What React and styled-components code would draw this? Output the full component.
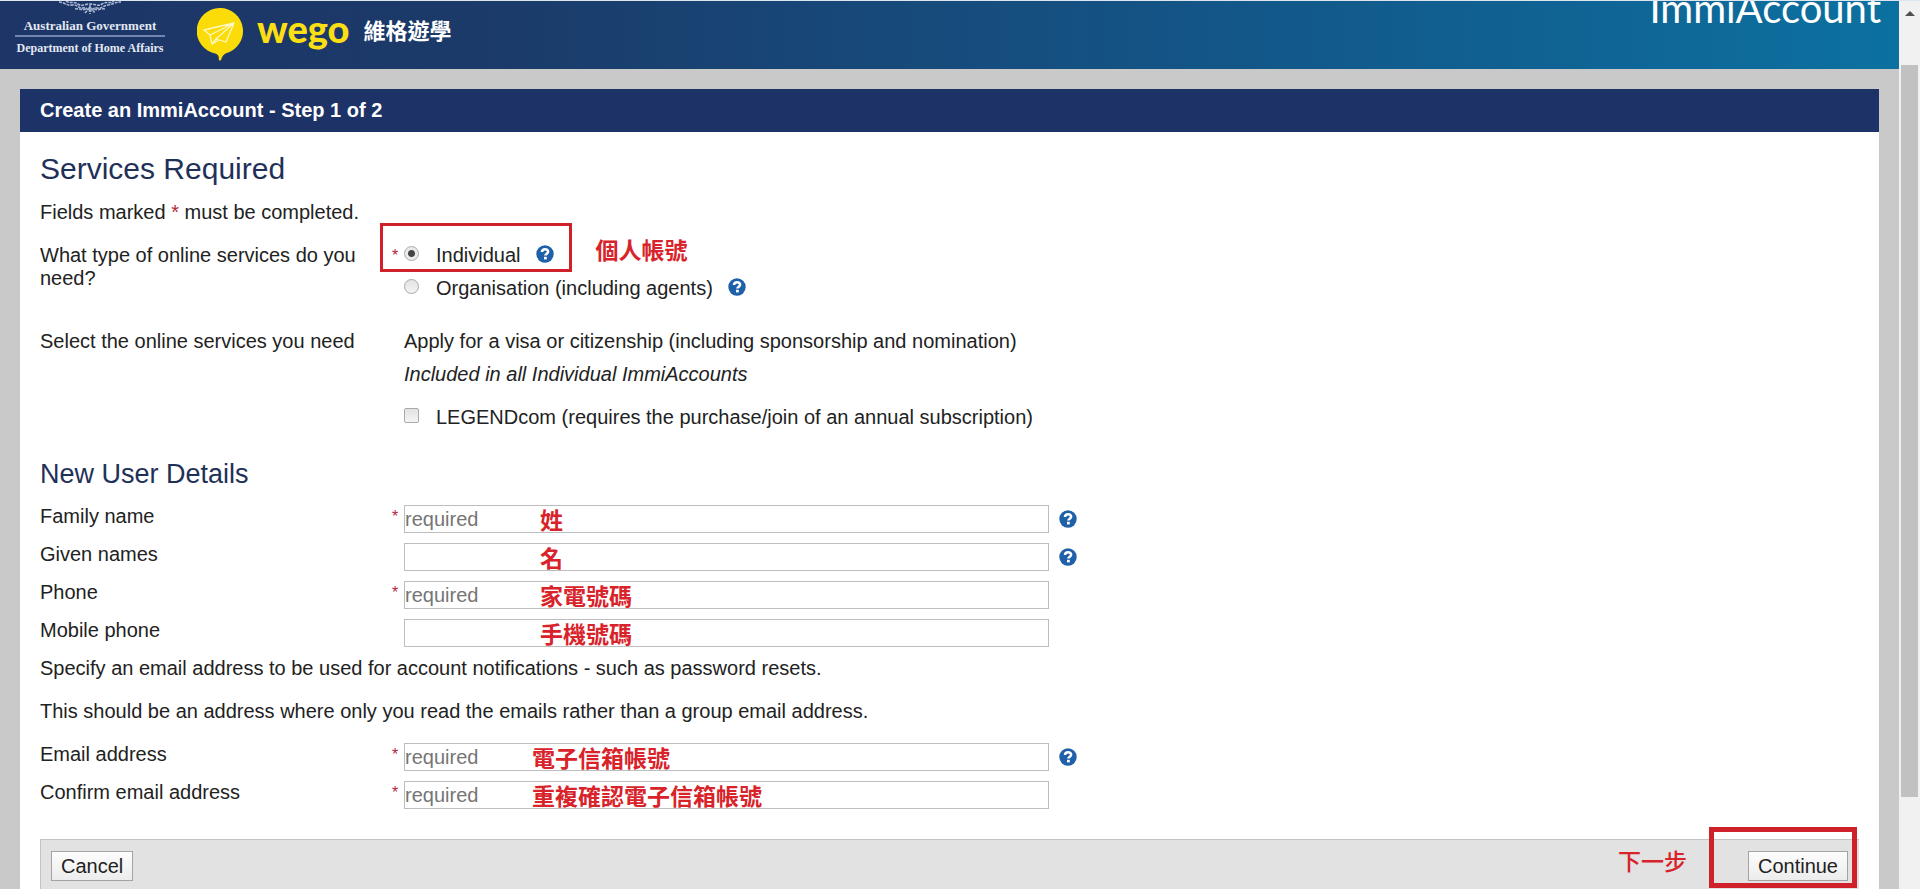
import { useState } from 'react';
import styled, { createGlobalStyle, css } from 'styled-components';

const GlobalStyle = createGlobalStyle`
    * {
        box-sizing: border-box;
    }

    body {
        margin: 0;
        background: #c9c9c9;
        color: #222;
        font-family: "Liberation Sans", Arial, "Noto Sans CJK TC", sans-serif;
        font-size: 20px;
        line-height: 23px;
    }

    h1, h2, p {
        margin: 0;
    }
`;

const Window = styled.div`
    display: flex;
    height: 100vh;
    overflow: hidden;
    border-top: 1px solid #dde6ee;
`;

const Page = styled.div`
    flex: 1;
    min-width: 0;
`;

const Header = styled.header`
    display: flex;
    align-items: flex-start;
    height: 68px;
    padding: 0 18px 0 15px;
    overflow: hidden;
    color: #fff;
    background: linear-gradient(90deg, #1d3567 0%, #1b3a69 25%, #125a8c 70%, #0c71a0 100%);
`;

const Crest = styled.div`
    display: flex;
    flex-direction: column;
    align-items: center;
    width: 150px;
    color: #e3e8f2;
    font-family: "Liberation Serif", "Times New Roman", serif;
    font-weight: bold;
    font-size: 12px;
    line-height: 16px;
    white-space: nowrap;

    svg {
        display: block;
    }
`;

const Government = styled.div`
    width: 100%;
    padding: 4px 0 1px;
    margin-bottom: 3px;
    border-bottom: 2px solid #7284b0;
    font-size: 13px;
    text-align: center;
`;

const Partner = styled.div`
    display: flex;
    align-items: flex-start;
    padding-top: 7px;
    margin-left: 32px;
`;

const Wordmark = styled.span`
    margin-left: 14px;
    color: #fbdf14;
    font-family: Lato, sans-serif;
    font-weight: 900;
    font-size: 38px;
    line-height: 40px;
`;

const PartnerName = styled.span`
    margin-left: 14px;
    font-family: "Noto Sans CJK TC", sans-serif;
    font-weight: 700;
    font-size: 22px;
    line-height: 42px;
`;

const Product = styled.span`
    margin-left: auto;
    font-family: Lato, sans-serif;
    font-size: 40px;
    line-height: 14px;
`;

const Panel = styled.main`
    margin: 20px 20px 0;
    background: #fff;
`;

const PanelTitle = styled.h1`
    padding: 10px 20px;
    background: #1d3266;
    color: #fff;
    font-size: 20px;
    line-height: 23px;
`;

const Form = styled.form`
    padding: 20px 20px 0;
`;

const Heading = styled.h2`
    margin-bottom: 15px;
    color: #1f3158;
    font-weight: normal;
    font-size: ${props => props.$small ? '27px' : '30px'};
    line-height: ${props => props.$small ? '31px' : '34px'};
`;

const Text = styled.p`
    margin-bottom: 20px;
`;

const Star = styled.span`
    color: #b5283c;
`;

const Row = styled.div`
    display: grid;
    grid-template-columns: 352px 1fr;
    align-items: start;
    min-height: ${props => props.$field ? '38px' : '0'};
    margin-bottom: ${props => props.$gap || '0'};
`;

const Question = styled.div`
    max-width: 330px;
`;

const Answer = styled.div`
    display: grid;
    grid-template-columns: 12px 1fr;

    > ${Star} {
        font-size: 16px;
    }
`;

const Options = styled.div`
    display: flex;
    flex-direction: column;
    align-items: flex-start;
    gap: 10px;
`;

const Included = styled.em`
    margin-bottom: 10px;
`;

const Option = styled.div`
    position: relative;
    display: flex;
    align-items: center;
`;

const tick = css`
    appearance: none;
    width: 15px;
    height: 15px;
    margin: 0 17px 4px 0;
    border: 1px solid #a9a9a9;
    background: linear-gradient(#e2e2e2, #f4f4f4);
`;

const Radio = styled.input.attrs({ type: 'radio' })`
    ${tick}
    border-radius: 50%;

    &:checked {
        background: radial-gradient(circle, #444 0 3px, #ebebeb 4px);
    }
`;

const Checkbox = styled.input.attrs({ type: 'checkbox' })`
    ${tick}
    border-radius: 2px;
`;

const HelpButton = styled.button`
    display: flex;
    margin-left: ${props => props.$far ? '15px' : '10px'};
    margin-bottom: ${props => props.$far ? '3px' : '0'};
    padding: 0;
    border: 0;
    background: none;
`;

const InputLine = styled.div`
    position: relative;
    display: flex;
    align-items: center;
`;

const TextInput = styled.input`
    width: 645px;
    max-width: 100%;
    height: 28px;
    padding: 0;
    border: 1px solid #bdbdbd;
    background: #fff;
    font: inherit;

    &::placeholder {
        color: #757575;
    }
`;

/* red notes laid over the form */
const Note = styled.span`
    color: #d8232a;
    font-family: "Noto Sans CJK TC", sans-serif;
    font-weight: 700;
    font-size: 23px;
    line-height: 28px;
    white-space: nowrap;
    pointer-events: none;
`;

const FieldNote = styled(Note)`
    position: absolute;
    top: 0;
    left: ${props => props.$left}px;
`;

const OptionNote = styled(Note)`
    position: absolute;
    bottom: 4px;
    left: 100%;
    margin-left: 42px;
`;

const StepNote = styled(Note)`
    font-weight: 500;
    line-height: 18px;
`;

const Frame = styled.span`
    position: absolute;
    inset: ${props => props.$inset};
    border: ${props => props.$thick ? '5px' : '3px'} solid #d0202a;
    pointer-events: none;
`;

const Footer = styled.footer`
    display: flex;
    align-items: flex-start;
    height: 70px;
    margin-top: 20px;
    padding: 11px 11px 11px 10px;
    border-top: 1px solid #c4c4c4;
    border-left: 1px solid #c4c4c4;
    background: #e2e2e2;
`;

const Button = styled.button`
    display: block;
    height: 30px;
    padding: 0 9px;
    border: 1px solid #a3a3a3;
    background: linear-gradient(#fdfdfd, #ececec);
    color: #222;
    font: inherit;
`;

const Next = styled.div`
    display: flex;
    align-items: flex-start;
    gap: 61px;
    margin-left: auto;
`;

const Target = styled.div`
    position: relative;
`;

const Scrollbar = styled.div`
    display: flex;
    flex-direction: column;
    align-items: center;
    width: 21px;
    background: #f1f1f1;
`;

const ArrowBox = styled.div`
    height: 64px;
    padding-top: 8px;
    line-height: 0;
`;

const Thumb = styled.div`
    width: 17px;
    height: calc(100% - 156px);
    background: #c1c1c1;
`;

const names = [
    { id: 'family', label: 'Family name', required: true, note: '姓', help: true },
    { id: 'given', label: 'Given names', note: '名', help: true },
    { id: 'phone', label: 'Phone', required: true, note: '家電號碼' },
    { id: 'mobile', label: 'Mobile phone', note: '手機號碼' },
];

const emails = [
    { id: 'email', label: 'Email address', required: true, note: '電子信箱帳號', help: true },
    { id: 'confirm', label: 'Confirm email address', required: true, note: '重複確認電子信箱帳號' },
];

const Help = ({ far }) => (
    <HelpButton type='button' aria-label='Help' $far={far}>
        <svg width='18' height='18' viewBox='0 0 18 18'>
            <circle cx='9' cy='9' r='8.7' fill='#1f61a8' />
            <path d='M6 7.100c0-1.900 1.200-2.900 3.100-2.900s3 1 3 2.500c0 2-2.700 2-2.700 3.900' fill='none' stroke='#fff' strokeWidth='2.600' />
            <rect x='8' y='11.800' width='2.800' height='2.600' fill='#fff' />
        </svg>
    </HelpButton>
);

const CrestArt = () => (
    <svg width='70' height='13' viewBox='0 0 70 13' fill='none' stroke='#a9b7d2' strokeWidth='1.600' strokeDasharray='3 1'>
        <path d='M4 1c6 0 7 4 13 3s6 4 11 3 4 3 7 3 2-4 7-3 5-2 11-3 7-3 13-3' />
        <path d='M11 0c4 3 8 0 12 3s6 0 12 0 8 3 12 0 8 0 12-3' />
        <path d='M20 8c5-1 6 2 11 0M50 8c-5-1-6 2-11 0M30 12l5-6 5 6M35 4v9' />
    </svg>
);

const Bubble = () => (
    <svg width='46' height='53' viewBox='0 0 46 53'>
        <path d='M23 0a23 23 0 0 1 6 45.200c-2 1-4 3-5 6.800q-1 1-2 0c-.5-3 .5-4-3-6.300A23 23 0 0 1 23 0z' fill='#fbdc08' />
        <g fill='none' stroke='#fff8c4' strokeWidth='1.300' strokeLinejoin='round'>
            <path d='M37 15L7 22l6 5zM37 15L13 27l2 9 4-5zM37 15L19 31l10 3z' />
            <path d='M15 36l7-4' />
        </g>
    </svg>
);

const Field = ({ field, left }) => {
    const [value, setValue] = useState('');

    return (
        <Row $field>
            <label htmlFor={field.id}>{field.label}</label>
            <Answer>
                <Star>{field.required && '*'}</Star>
                <InputLine>
                    <TextInput id={field.id} name={field.id} type='text' value={value}
                        placeholder={field.required ? 'required' : ''}
                        onChange={(e) => setValue(e.target.value)} />
                    <FieldNote $left={left}>{field.note}</FieldNote>
                    {field.help && <Help />}
                </InputLine>
            </Answer>
        </Row>
    );
};

const App = () => {
    const [type, setType] = useState('individual');

    return (
        <Window>
            <GlobalStyle />
            <Page>
                <Header>
                    <Crest>
                        <CrestArt />
                        <Government>Australian Government</Government>
                        <div>Department of Home Affairs</div>
                    </Crest>
                    <Partner>
                        <Bubble />
                        <Wordmark>wego</Wordmark>
                        <PartnerName>維格遊學</PartnerName>
                    </Partner>
                    <Product>ImmiAccount</Product>
                </Header>

                <Panel>
                    <PanelTitle>Create an ImmiAccount - Step 1 of 2</PanelTitle>
                    <Form onSubmit={(e) => e.preventDefault()}>
                        <Heading>Services Required</Heading>
                        <Text>Fields marked <Star>*</Star> must be completed.</Text>

                        <Row $gap='30px' role='radiogroup' aria-labelledby='type-label'>
                            <Question id='type-label'>What type of online services do you need?</Question>
                            <Answer>
                                <Star>*</Star>
                                <Options>
                                    <Option>
                                        <Radio id='individual' name='type' checked={type === 'individual'}
                                            onChange={() => setType('individual')} />
                                        <label htmlFor='individual'>Individual</label>
                                        <Help far />
                                        <Frame $inset='-21px -18px -5px -24px' />
                                        <OptionNote>個人帳號</OptionNote>
                                    </Option>
                                    <Option>
                                        <Radio id='organisation' name='type' checked={type === 'organisation'}
                                            onChange={() => setType('organisation')} />
                                        <label htmlFor='organisation'>Organisation (including agents)</label>
                                        <Help far />
                                    </Option>
                                </Options>
                            </Answer>
                        </Row>

                        <Row $gap='30px'>
                            <Question>Select the online services you need</Question>
                            <Answer>
                                <span />
                                <Options>
                                    <div>Apply for a visa or citizenship (including sponsorship and nomination)</div>
                                    <Included>Included in all Individual ImmiAccounts</Included>
                                    <Option>
                                        <Checkbox id='legend' name='legend' />
                                        <label htmlFor='legend'>LEGENDcom (requires the purchase/join of an annual subscription)</label>
                                    </Option>
                                </Options>
                            </Answer>
                        </Row>

                        <Heading $small>New User Details</Heading>
                        {names.map(f => <Field key={f.id} field={f} left={136} />)}
                        <Text>Specify an email address to be used for account notifications - such as password resets.</Text>
                        <Text>This should be an address where only you read the emails rather than a group email address.</Text>
                        {emails.map(f => <Field key={f.id} field={f} left={128} />)}

                        <Footer>
                            <Button type='button'>Cancel</Button>
                            <Next>
                                <StepNote>下一步</StepNote>
                                <Target>
                                    <Button type='submit'>Continue</Button>
                                    <Frame $thick $inset='-24px -9px -7px -39px' />
                                </Target>
                            </Next>
                        </Footer>
                    </Form>
                </Panel>
            </Page>
            <Scrollbar aria-hidden='true'>
                <ArrowBox>
                    <svg width='10' height='6' viewBox='0 0 10 6'><path d='M0 6l5-5 5 5z' fill='#505050' /></svg>
                </ArrowBox>
                <Thumb />
            </Scrollbar>
        </Window>
    );
};

export default App;
